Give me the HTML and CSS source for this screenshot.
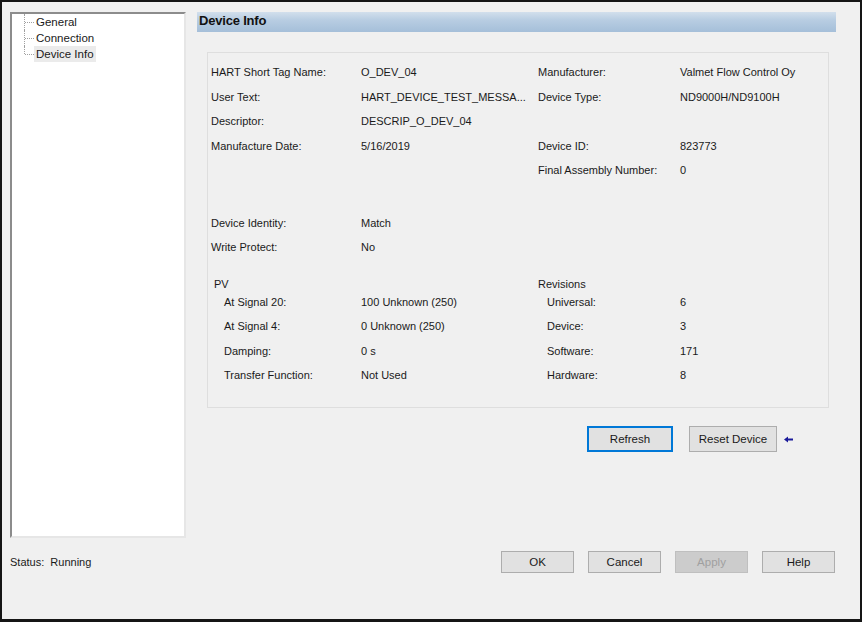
FILE: index.html
```html
<!DOCTYPE html>
<html>
    <head>
        <title>Device Info</title>
        <link rel="stylesheet" href="styles.css">
    </head>
    <body>
        <div class="window">
            <div class="top">
                <div class="tree">
                    <ul>
                        <li><span class="twig"></span><span class="node">General</span></li>
                        <li><span class="twig"></span><span class="node">Connection</span></li>
                        <li class="last"><span class="twig"></span><span class="node selected">Device Info</span></li>
                    </ul>
                </div>

                <div class="main">
                    <div class="header">Device Info</div>

                    <div class="group">
                        <div class="rows">
                            <span>HART Short Tag Name:</span><span>O_DEV_04</span>
                            <span>Manufacturer:</span><span>Valmet Flow Control Oy</span>

                            <span>User Text:</span><span>HART_DEVICE_TEST_MESSA...</span>
                            <span>Device Type:</span><span>ND9000H/ND9100H</span>

                            <span>Descriptor:</span><span>DESCRIP_O_DEV_04</span>
                            <span></span><span></span>

                            <span>Manufacture Date:</span><span>5/16/2019</span>
                            <span>Device ID:</span><span>823773</span>

                            <span></span><span></span>
                            <span>Final Assembly Number:</span><span>0</span>
                        </div>

                        <div class="rows identity">
                            <span>Device Identity:</span><span>Match</span><span></span><span></span>
                            <span>Write Protect:</span><span>No</span><span></span><span></span>
                        </div>

                        <div class="sub-groups">
                            <div class="sub pv">
                                <p class="sub-title">PV</p>
                                <div class="sub-rows">
                                    <span>At Signal 20:</span><span>100 Unknown (250)</span>
                                    <span>At Signal 4:</span><span>0 Unknown (250)</span>
                                    <span>Damping:</span><span>0 s</span>
                                    <span>Transfer Function:</span><span>Not Used</span>
                                </div>
                            </div>
                            <div class="sub revisions">
                                <p class="sub-title">Revisions</p>
                                <div class="sub-rows">
                                    <span>Universal:</span><span>6</span>
                                    <span>Device:</span><span>3</span>
                                    <span>Software:</span><span>171</span>
                                    <span>Hardware:</span><span>8</span>
                                </div>
                            </div>
                        </div>
                    </div>

                    <div class="actions">
                        <button class="btn focused">Refresh</button>
                        <button class="btn">Reset Device</button>
                        <svg class="arrow" width="9" height="7" viewBox="0 0 9 7">
                            <path d="M0 3.5 L4 0.5 L4 2.5 L9 2.5 L9 4.5 L4 4.5 L4 6.5 Z" fill="#1a1a9a"/>
                        </svg>
                    </div>
                </div>
            </div>

            <div class="footer">
                <p class="status">Status:&nbsp; Running</p>
                <div class="dialog-buttons">
                    <button class="btn small">OK</button>
                    <button class="btn small">Cancel</button>
                    <button class="btn small" disabled>Apply</button>
                    <button class="btn small">Help</button>
                </div>
            </div>
        </div>
    </body>
</html>
```

FILE: styles.css
```css
body {
    margin: 0;
    font-family: "Liberation Sans", Arial, sans-serif;
    font-size: 11px;
    color: #1a1a1a;
}
.window {
    width: 862px;
    height: 622px;
    box-sizing: border-box;
    background-color: #f0f0f0;
    border: 2px solid #151515;
    border-bottom-width: 3px;
    display: flex;
    flex-direction: column;
}
.top {
    display: flex;
    padding: 10px 0 0 8px;
}

/* tree */
.tree {
    width: 176px;
    height: 526px;
    box-sizing: border-box;
    background-color: white;
    border: 2px solid;
    border-color: #8c8c8c #e6e6e6 #e6e6e6 #8c8c8c;
    padding: 0 0 0 12px;
}
.tree ul {
    list-style: none;
    margin: 0;
    padding: 0;
}
.tree li {
    display: flex;
    height: 16px;
}
.twig {
    width: 9px;
    height: 16px;
    border-left: 1px dotted #a0a0a0;
}
.twig::after {
    content: "";
    display: block;
    height: 8px;
    border-bottom: 1px dotted #a0a0a0;
}
.tree li.last .twig {
    height: 8px;
}
.node {
    line-height: 16px;
    padding: 0 2px;
    font-size: 11.5px;
}
.selected {
    background-color: #ebebeb;
}

/* main part */
.main {
    margin-left: 11px;
    display: flex;
    flex-direction: column;
}
.header {
    width: 639px;
    height: 20px;
    box-sizing: border-box;
    padding-left: 2px;
    line-height: 17px;
    font-size: 13px;
    font-weight: bold;
    letter-spacing: -0.2px;
    color: #111;
    background: linear-gradient(#d2dfec, #b8cde2 40%, #a5bfd9);
}
.group {
    width: 622px;
    height: 356px;
    box-sizing: border-box;
    margin: 20px 0 0 10px;
    border: 1px solid #dedede;
    padding: 7px 0 0 3px;
}
.rows {
    display: grid;
    grid-template-columns: 150px 177px 142px 1fr;
    grid-auto-rows: 24.5px;
    align-items: center;
}
.identity {
    margin-top: 28px;
}
.sub-groups {
    display: grid;
    grid-template-columns: 327px 1fr;
    margin-top: 18px;
}
.sub-title {
    margin: 0;
    height: 12px;
    line-height: 12px;
}
.pv .sub-title {
    padding-left: 3px;
}
.sub-rows {
    display: grid;
    grid-auto-rows: 24.5px;
    align-items: center;
}
.pv .sub-rows {
    grid-template-columns: 137px 1fr;
    padding-left: 13px;
}
.revisions .sub-rows {
    grid-template-columns: 133px 1fr;
    padding-left: 9px;
}

/* buttons */
.btn {
    font-family: "Liberation Sans", Arial, sans-serif;
    font-size: 11.5px;
    color: #1a1a1a;
    background-color: #e1e1e1;
    border: 1px solid #adadad;
    padding: 0;
}
.btn:disabled {
    background-color: #cccccc;
    border-color: #bfbfbf;
    color: #a0a0a0;
}
.actions {
    display: flex;
    align-items: center;
    margin: 18px 0 0 390px;
    gap: 16px;
}
.actions .btn {
    height: 26px;
    width: 88px;
}
.actions .focused {
    width: 86px;
    border: 2px solid #0078d7;
}
.arrow {
    margin-left: -9px;
}
.footer {
    display: flex;
    justify-content: space-between;
    align-items: center;
    padding: 13px 25px 0 8px;
}
.status {
    margin: 0;
}
.dialog-buttons {
    display: flex;
    gap: 14px;
}
.btn.small {
    width: 73px;
    height: 22px;
}
```
